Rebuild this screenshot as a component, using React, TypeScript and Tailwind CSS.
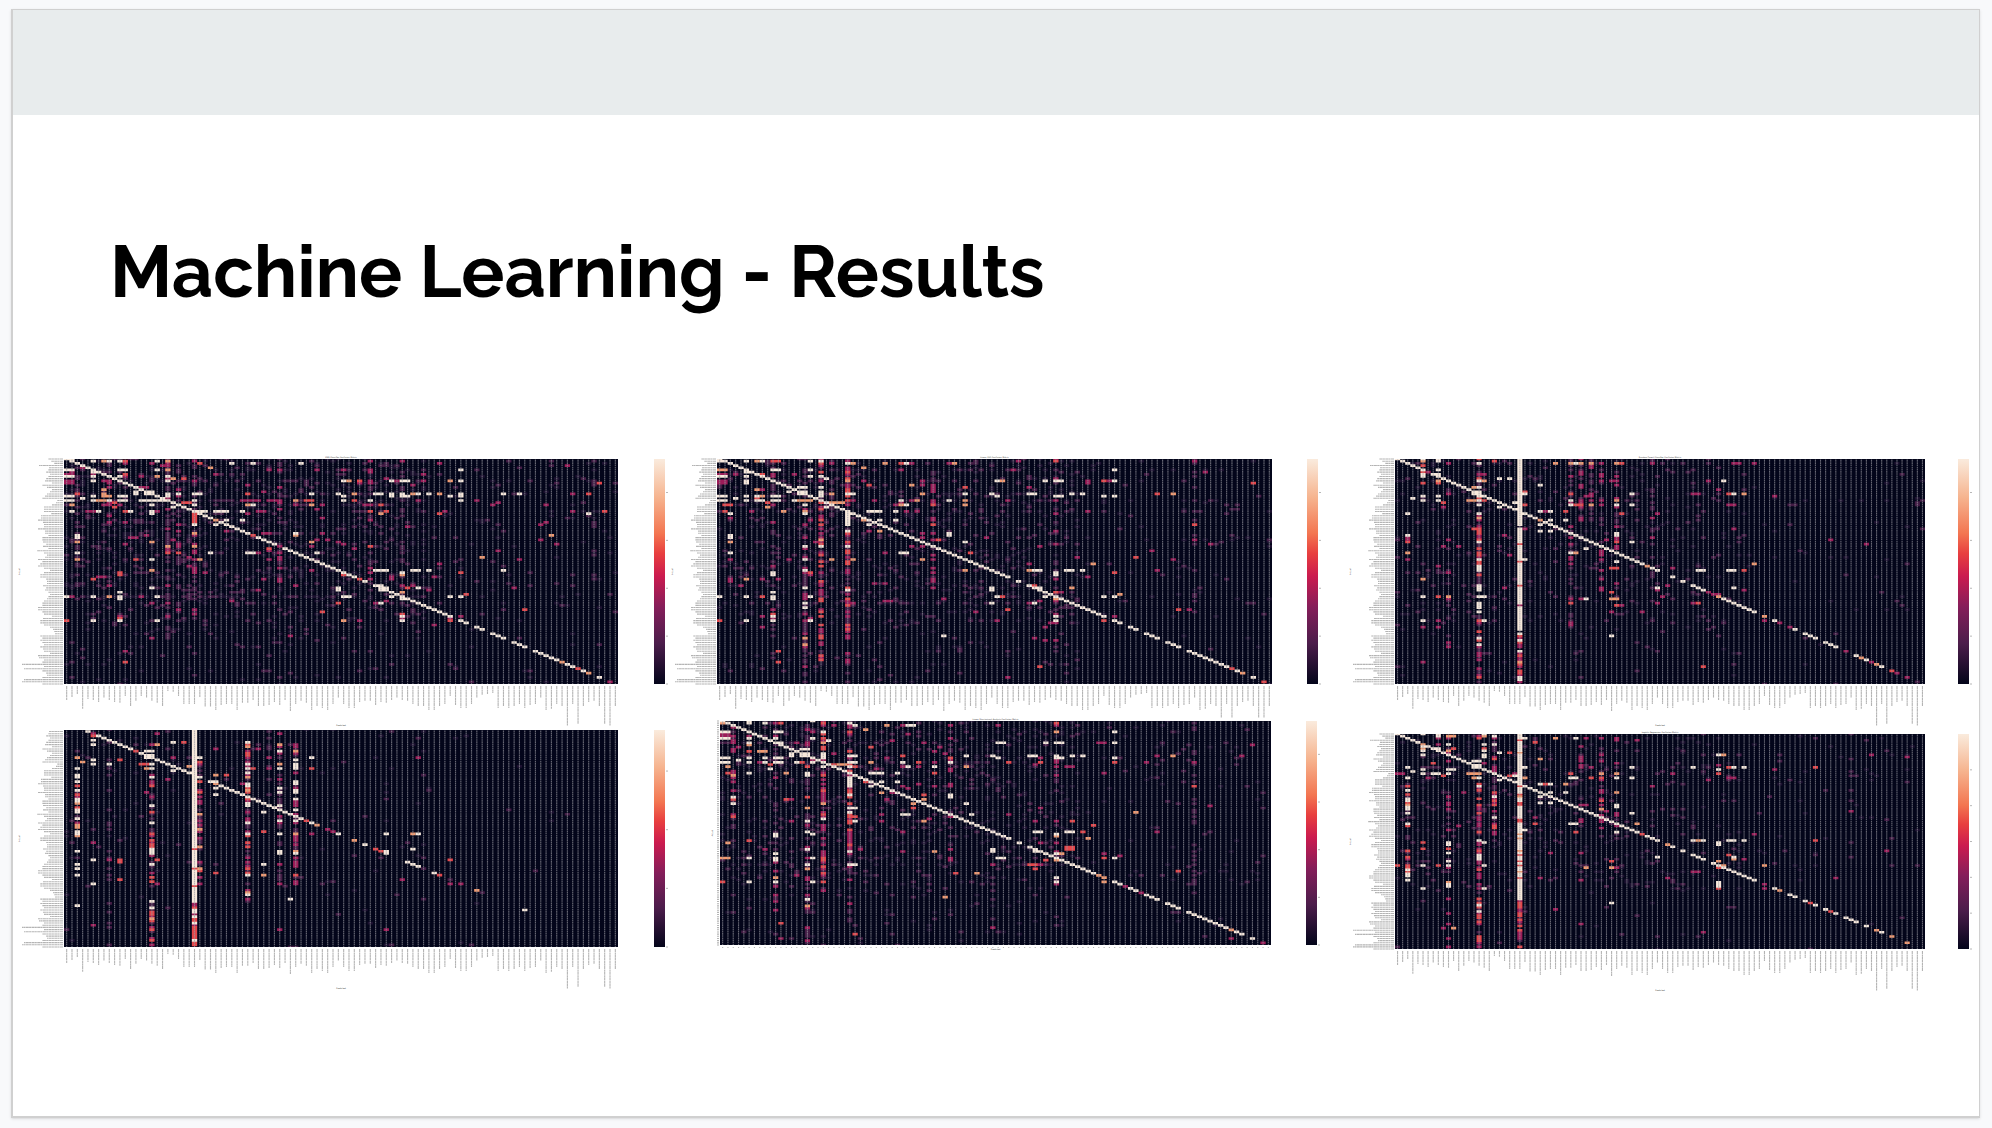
import React from "react";

const SIZE = 104;

const LEVELS: Record<string, string> = {
  d: "#1c1130",
  p: "#431c45",
  m: "#9c1c58",
  r: "#e4464a",
  o: "#f39a70",
  w: "#f8e9dc",
};

/* Approximate printed length of each class name on the axes. */
const NAMES = [
  14, 11, 8, 23, 13, 14, 16, 12, 14, 16, 17, 10, 20, 15, 10, 12, 15, 17, 20, 5, 6, 10, 18, 18, 18, 11,
  21, 21, 24, 19, 18, 18, 24, 17, 17, 14, 20, 20, 19, 16, 19, 14, 25, 18, 15, 17, 24, 20, 22, 24, 18, 12,
  18, 22, 22, 16, 15, 15, 19, 16, 17, 14, 12, 14, 15, 18, 20, 20, 24, 24, 20, 18, 10, 19, 22, 22, 18, 12,
  9, 8, 7, 22, 20, 22, 20, 18, 22, 19, 18, 12, 24, 23, 18, 20, 40, 18, 38, 20, 16, 15, 20, 38, 40, 20,
];

type Streak = { col: number; density: number; palette: string; from?: number; to?: number };

type Matrix = {
  title: string;
  width: number;
  height: number;
  plot: { x: number; y: number; w: number; h: number };
  barX: number;
  firstRow?: number;
  ticksOnly?: boolean;
  hideTitle?: boolean;
  hidePredicted?: boolean;
  barTicks: number;
  seed: number;
  haze: number;
  diagonal: string;
  streaks: Streak[];
  busyRows: number[];
  cells: string;
};

const MATRICES: Matrix[] = [
  {
    title: "KNN Classifier Confusion Matrix",
    width: 656,
    height: 274,
    plot: { x: 51, y: 3, w: 554, h: 225 },
    barX: 641,
    barTicks: 5,
    seed: 11,
    haze: 0.14,
    diagonal: "0-54w 55r 56w 58-72w 74-75w 77-78w 80-82w 84-86w 88-92w 93o 94-95w 96r 97w 98o 100w 102m",
    busyRows: [5, 10, 16, 19, 21, 24, 43, 63],
    streaks: [
      { col: 19, density: 0.5, palette: "ppm", to: 82 },
      { col: 24, density: 0.5, palette: "ppm", to: 76 },
      { col: 21, density: 0.3, palette: "ppm", to: 70 },
      { col: 8, density: 0.25, palette: "ppm", to: 60 },
      { col: 2, density: 0.3, palette: "p", to: 60 },
      { col: 57, density: 0.25, palette: "ppm", to: 60 },
      { col: 40, density: 0.3, palette: "ppm", to: 60 },
      { col: 63, density: 0.3, palette: "ppp", to: 90 },
      { col: 99, density: 0.2, palette: "p", to: 60 },
    ],
    cells:
      "0:0-1w|1:5w 7o 8w 10w 11r 17w 19o 24m 46p 57m 63m 99p|2:11m 16m 19m 25r 31w 35w 44w 34p 36p 70m|3:18m 8p 40p|4:27o|5:0-1w 5w 10-11w 17w 19o 38m 40m 52m 74w|6:5w 1m 8p|7:0-1m 5m 11r 14p 52p|8:0-1w 5w 10w 11m 14m 17o 19w|9:20o 22r|10:0-1m 5w 7-8m 19w 36p 45p 52w 53o 55r 61w 63-64w 72o 74w 87p|11:0-1m 8m 24p 55m 100r|12:28p 34m 45p|13:15m 46p|14:7o|15:13w 15-16w|16:2r 7o 13w 15w 19w 21w 24-25w 34r 46w 51w 54o 58-59w 61w 63w 65o 66w 68w 70o 74w 82w 85w 95m 98r|17:0-1w 5w 7-8o 10-11w 19w 52w 61w 63-64w 72w 74w|18:3w|19:0-1w 5w 6-7o 8w 10-11w 14-18w 24w 28-31p 33-36m 38-40m 43o 45-46r 52w 54r 57w 74w 77m|20:22-23r 9r|21:1o 7-8m 10m 16w 24w 34o 35w 43m 46o 59r 80m|22:9r 20w|24:1w 4-5m 6w 11r 12w 16w 25-26w 28-30w 33w 36-37m 57r 60r 59p 95m 101r|25:16w 59o 70r 98w 34m 24r|26:24r|27:24r|28:24r 28o 30w 33w|29:24r|30:28w 24w 89m 19p 99p|33:30m|34:24o 43w 37-38m 48m|35:2w 35r 43o 91o|36:2w 12-13m|37:49m 47m 89m|38:2o 16o 46o|39:21m 92m|40:19o 24o 57r 40m 21m|41:38r 54m|42:19m 81m|43:2w 19r 21r 24m 27w 34-35w 36m 47w|45:78o|46:2o 13r 16w 25o 38m 40m 85m|48:70m|50:41p 70p|51:16o 24m 46m 58-60w 65-66w 68w 82w|52:10r 63w 74r 17p|53:10r 52r 63o|54:61m 69m|55:5r 61m|58:65m 59w 63m|59:16w 51w 60w 64r 66w|60:51w 36m 59w 68m|61:10w 63o|62:75r|63:0w 1m 5w 8o 10w 14m 17w 52-53w 61w 72w 74w|64:10w 63w|65:31m 60m|66:16m 51r 59w 58m|69:86r 21m|70:48r|71:63r 10p|72:10m 63w 74m|73:10r 63m 72m|74:0r 5w 10w 17w 52o 55m 63w 72r|76:69m 11p|81:42m|82:16m|88:11m|93:11r",
  },
  {
    title: "Linear SVC Confusion Matrix",
    width: 672,
    height: 262,
    plot: { x: 48, y: 3, w: 555, h: 225 },
    barX: 638,
    barTicks: 5,
    hidePredicted: true,
    seed: 23,
    haze: 0.11,
    diagonal: "0-54w 56w 58-72w 74-75w 77-78w 80-82w 84-86w 88-95w 96r 97w 98o 100w 102r",
    busyRows: [5, 10, 16, 19, 21, 24, 63, 66],
    streaks: [
      { col: 19, density: 0.6, palette: "pmmmr", to: 92 },
      { col: 24, density: 0.7, palette: "ppmmr", to: 78 },
      { col: 24, density: 0.4, palette: "ppm", from: 79 },
      { col: 16, density: 0.5, palette: "ppm" },
      { col: 21, density: 0.3, palette: "p", to: 60 },
      { col: 10, density: 0.25, palette: "ppm", to: 90 },
      { col: 40, density: 0.3, palette: "pm", to: 60 },
      { col: 63, density: 0.3, palette: "ppm", to: 90 },
      { col: 89, density: 0.2, palette: "p", to: 70 },
    ],
    cells:
      "1:0-1w 5w 7o 8w 10-11r 17w 19w 24m 56m 63r 89m|2:21m 24w 25o 31o 34r 35w 36m 43m 44o|4:27o|5:0-1o 5w 10-11w 17w 24m 63p 74w|6:5w 3p 19r|7:0-1m 3m 8r 10m 14m|8:0-1w 5w 17w 19w|9:20w 22p|10:0-1m 5w 19m 24o 52w 53o 61w 63-64w 72r 73m 74w 69m 87p|11:0-1m 5w 100r 69m|12:24m 28r 36o 76p|13:15-16w 46r 19w|14:7o 8m|15:13w 16w 19w|16:15w 19w 21o 24-25w 38o 46w 51w 58-59w 66w 68w 82r 85o|17:0-1w 5w 7w 8o 10-11w 19w 24r 52w 63-64w 72w 74w|18:3w 7r|19:0-1w 5w 7-8w 10-11w 14w 15-17o 24r 25m 29m 34w 36m 37o 40m 43w 46o 54m 63m 92p|20:9r 21o 22-23o 34m|21:1-2r 10m 16w 34o 35w 40r 46o|22:9o 20w|24:1r 6m 12o 16o 28-30w 33w 37m 69m|25:2w 16w 24w|26:24w|27:2m 24w 40m|28:19r 24w 27o 30w 33w|29:24w|30:24w 28w 40r 89r|33:24w 28m 30o|34:24r 38m 43w|35:2w 24m 43w|36:2w 16m 38m 50m|37:19o 41r 89m|38:2o 24r 46w|39:24m 92m|40:16w 19w 24w 36m 38m 60m|42:81m 24r|43:2w 19m 24r 34-35w 47r|45:78r|46:2m 13m 16w 21o 25o 38o 40m 85m|48:70o|51:16w 24m 46o 58o 59-60w 65-66w 68w 82m|52:10w 17r 19m 63w 74r|53:10w 17m 63w|54:69m|55:5o 8m 63m|58:59r|59:16w 51w 60w 66o|60:24w 51w|61:10w 63r 64m|62:75o|63:0w 5w 8r 10w 17w 52w 53r 61w 72w 74w|64:10w 19r 24r 63o 42m|65:31-32m 19r 60m|66:16w 51w 58m 59w 25m|68:16w|69:54r 86r 88m|70:48m 24m|71:10r 63m|72:10w 8m 19r 63w 74m|73:10m 17m|74:0r 5w 10w 17w 52m 63w 72r|75:62m|77:8m 61m|81:42w|82:16o 59m|83:61m|85:16o|88:11r|93:11r|95:60r|100:54m",
  },
  {
    title: "Random Forest Classifier Confusion Matrix",
    width: 638,
    height: 275,
    plot: { x: 54, y: 3, w: 530, h: 225 },
    barX: 617,
    barTicks: 5,
    seed: 37,
    haze: 0.06,
    diagonal: "0-48w 49o 50-51w 54w 56w 58-60w 61-62m 63o 64-70w 72o 74w 75m 77m 78w 80-82w 84-86w 88m 90w 91o 92w 93m 94o 95w 97r 98m 100m 102p",
    busyRows: [2, 10, 16, 19, 21],
    streaks: [
      { col: 24, density: 1, palette: "w", to: 78 },
      { col: 24, density: 0.9, palette: "mrrow", from: 80 },
      { col: 16, density: 0.6, palette: "pppmr" },
      { col: 34, density: 0.4, palette: "pm", to: 80 },
      { col: 36, density: 0.5, palette: "pm", to: 28 },
      { col: 38, density: 0.5, palette: "pm", to: 28 },
      { col: 40, density: 0.4, palette: "pm", to: 60 },
      { col: 50, density: 0.2, palette: "p", to: 60 },
      { col: 43, density: 0.4, palette: "pm", to: 68 },
      { col: 10, density: 0.2, palette: "pm", to: 90 },
    ],
    cells:
      "0:5w 8w|1:5o 8w 19r|2:16w 31o 34o 35w 36o 38o 40m 43o 44r 50m 66-67m 70m|3:5r|5:5w 8w|6:6m 5r|7:5w 8w 16m 17m|8:5w|9:20w 22w|10:8o 16w 17o 34p 40m 42-43m 64w 61m|11:8r 5r|12:28w 36m|13:15o 16w 36m|15:16w 25r|16:15w 25w 34r 38m 46w 58-59m 65r 66w 68o|17:5w 8w 16w 37-38m 74m|18:3w|19:5w 8w 14-15o 16w 17r 28p 34w 40m 43o|20:9r 23w|21:16w 25r 34w 35-36r 38o 40m 43w 46w 65-66m|22:20w 9m|24:28w 30w 33r 29m|25:2w 16w 44r|27:16o 50m|28:28o 30w 33w|30:28w|31:24d|32:15r 25m|33:16r 28w 30w|34:16r 43w|35:2w 21m 43w 16m|36:2m 16m 50m|37:2m 16r 41m|38:2r 16w 46w 43r|39:92m 24r|41:37w 16r|43:2o 34w 35o|44:16r|46:2m 16w 25w 40m|47:43w 24r|48:70o 16r|49:16w|50:16w 42-43r|51:16w 59-60w 65-66w 68r|52:10m|55:5o|58:16w 24r|59:16w 21m 51w 59w 66w|60:51m 16w 68m|61:42r|62:63m|63:5w 8r 10o 17w 16w 52m|64:10m 37w 42-43o 36m|66:16w 34r 51m 58m 59r|67:16w 43r 44m 24m|68:16w|70:16w 42m 48m|74:5w 8m 17w 72m|77:5m 8m|81:42w|82:16w|85:16w|93:5m|95:60r",
  },
  {
    title: "",
    width: 656,
    height: 262,
    plot: { x: 51, y: 0, w: 554, h: 217 },
    barX: 641,
    barTicks: 4,
    firstRow: 3.8,
    hideTitle: true,
    seed: 41,
    haze: 0.02,
    diagonal: "4-12w 13r 14-23w 27-44w 45r 46w 47o 49m 51w 54o 56w 58-59r 60w 64-66w 67p 69w 70r 74m 77o 78p 86w",
    busyRows: [10, 16, 21],
    streaks: [
      { col: 24, density: 1, palette: "w", to: 81 },
      { col: 24, density: 0.95, palette: "mrrwww", from: 82 },
      { col: 25, density: 0.55, palette: "ppmmro", from: 16, to: 74 },
      { col: 2, density: 0.6, palette: "pmrow", from: 24, to: 52 },
      { col: 16, density: 0.45, palette: "ppmmr", from: 20 },
      { col: 34, density: 0.75, palette: "ppmmrw", from: 9, to: 82 },
      { col: 40, density: 0.5, palette: "pppmw", from: 9, to: 74 },
      { col: 43, density: 0.65, palette: "ppmmow", from: 9, to: 74 },
      { col: 8, density: 0.2, palette: "p" },
      { col: 38, density: 0.25, palette: "ppm", to: 36 },
    ],
    cells:
      "5:17m 40m 5m|6:5r|8:5w|9:20w 22r|10:5w 16m 17o 34r 36p 40o 43m|11:34o|12:28m 36m|13:15-16w 43o|15:16w|16:2o 15w 25w 34m 46w 66m|17:5w 10r 43w|18:3o|19:5w 8w 14-15r 16w 34w 40o 43w|20:23o 43w|21:2w 15o 16w 34w 35r 38m 40w 43w 46r|22:20w|24:28o 30r 2w 34m|25:2w 16w 25w 34o|27:2w 28w 43w|28:28o 33m 43w|30:28w 34r|31:2w 34o 43w|32:15m 25r 34r 40w 43w|33:28w|35:2w 34r 43w|36:2w|38:16w|41:2w 16r 37w|46:16w|47:2o|48:2o|50:2w 37r|51:2w 34w 46m 60w 65o 66w|55:5m|58:24r 65w 16w|59:2w 16w 60w 40w 43o|60:16w 60w 40w 43w|63:5w 8m 10r 17r 72r|64:10r 43m|65:2w 16w 37w|67:24r 2w|69:28r 16m|70:2w 37o 43r|72:63m 72p 10r|74:5w 17m 72m|75:24r|78:34o|81:42w|82:16w|84:2w|85:16w|90:16o|93:5m|95:60m 40m",
  },
  {
    title: "Linear Discriminant Analysis Confusion Matrix",
    width: 672,
    height: 262,
    plot: { x: 51, y: 3, w: 551, h: 224 },
    barX: 637,
    barTicks: 5,
    ticksOnly: true,
    seed: 53,
    haze: 0.11,
    diagonal: "0-54w 56w 58-70w 71-72o 74-75w 76m 77-78w 79m 80-82w 84-86w 88-95w 96o 97-98w 100w 102m",
    busyRows: [5, 10, 17, 19, 21, 63, 66],
    streaks: [
      { col: 19, density: 0.6, palette: "pmmr", to: 78 },
      { col: 24, density: 0.7, palette: "ppmmr", to: 60 },
      { col: 24, density: 0.5, palette: "ppm", from: 61, to: 95 },
      { col: 16, density: 0.5, palette: "ppm" },
      { col: 2, density: 0.3, palette: "pm", to: 50 },
      { col: 10, density: 0.3, palette: "ppm", to: 90 },
      { col: 43, density: 0.3, palette: "ppm", to: 66 },
      { col: 63, density: 0.3, palette: "ppm", to: 90 },
      { col: 89, density: 0.3, palette: "p", to: 80 },
    ],
    cells:
      "0:0w 5w 17w|1:0o 5w 8w 10m 11r 19r 24w 63r|2:21m 25w 31o 34m 35-36w 43m|4:27o|5:0-1w 10-11w 17m 19w 24r 63o 74w|6:0-1m|7:0-1m 5m 10m|8:0-1w 5w 10w 17w 19r|9:20w|10:0-1p 5w 11w 19o 38m 52-53w 61w 63-64w 71-72m 74w|11:5o 100m|12:28r|13:15-16w 19r|14:7-8o 5r 40m|15:13w 16w 19w 21m|16:13w 15w 19w 24-25w 34r 46w 51w 58-59w 66w 68w 63w 82m 85o 98m|17:0-1w 5w 8w 10-11w 19w 24m 43r 52w 60m 63-64w 74w|18:3w|19:0-1w 5w 7m 8w 10-11w 14w 15r 17w 24-25w 28o 34w 37r 40m 43w 54r 60r 63m 74r 89m|20:9r 21r 22-23o 24r|21:1o 16r 19w 24w 25r 34m 35w 37m 40w 46o 63m 65-66m|22:9w|24:1r 5w 12o 16w 28-30w 33w 40r|25:2o 16w|26:24w|27:24w|28:24w 27r 30w 33w|29:24w|30:24w 28w 34m 43m 89r|33:30o 24r|34:38r 43w 24w|35:2w 16r 43w|36:2r 12r 13m 19m 38o|38:2w 24r 36o 46w 19o|39:92m|40:16o 24-25w 36r 60m|42:78o 24w|43:2m 24r 30m 34-35w 47w|44:2r 24-25r|45:19w|46:13m 16w 25w 38o 66r|48:70r|51:16w 24m 59-60w 65-66w 68r 82m|52:10w 17w 63w|53:10w 63o|54:69o|55:5r|56:1o|58:65-66r|59:16w 51w 65-66r|60:51w 24w 40o 34m 59w|61:10w 63w 64o 72m|62:75m|63:0-1o 5w 10w 17w 52-53w 72r 74w|64:10w 19r 43m 61r 63o|66:16w 24-25w 58-59r 60m 51m|68:16o 59r|69:86r|70:48o 44r|71:14m|72:10o 63w|74:0r 5w 10w 17w 63w 72o|81:42o|82:16w|85:16o|87:10m|93:11r|95:51m 16m|98:25r|100:11m 96m",
  },
  {
    title: "Logistic Regression Confusion Matrix",
    width: 638,
    height: 261,
    plot: { x: 54, y: 3, w: 530, h: 215 },
    barX: 617,
    barTicks: 6,
    seed: 67,
    haze: 0.07,
    diagonal: "0-47w 48r 49-51w 53o 54w 56w 58-60w 62-70w 72m 74w 75o 77-78w 80w 81r 82w 84w 85r 86w 88-90w 92w 94o 95w 97o 100o",
    busyRows: [2, 10, 16, 19, 21],
    streaks: [
      { col: 24, density: 1, palette: "wwwwro", to: 80 },
      { col: 24, density: 0.9, palette: "pmmrr", from: 80 },
      { col: 16, density: 0.7, palette: "ppmmr", from: 24 },
      { col: 19, density: 0.6, palette: "pmmr", to: 48 },
      { col: 2, density: 0.5, palette: "pmrw", from: 24, to: 70 },
      { col: 40, density: 0.3, palette: "pm", to: 48 },
      { col: 36, density: 0.25, palette: "pm", to: 70 },
      { col: 43, density: 0.35, palette: "pm", to: 68 },
      { col: 10, density: 0.25, palette: "pm" },
      { col: 89, density: 0.2, palette: "p", to: 60 },
    ],
    cells:
      "0:5w 8w 17w 24w|1:8w 10-11o 16m 17o 19w|2:16r 25w 31o 35w 37m 43m|4:27r|5:5o 8m 10w 17w 19w|6:5w|7:5o 8w 11r 17r|8:5w 10o 17w|9:20w 22r|10:5w 17w 40m 63w 64o|11:17w 100m|12:28o 36m|13:15-16w 36m|14:7r 17m|15:16w|16:2w 15w 25w 38m 46w 58w 65r 66w 68w 82r|17:5w 10-11w 63w 74m|18:3w|19:0-1m 5w 7-8w 10w 14-16o 23m 34r 40o 43o 54m 63r|20:9r 22r 23w|21:2w 15o 16w 25o 34-35w 38r 40r 43w 46w 66m|22:20w|24:16r 28w 29r 30w 33o|25:2r 16w|27:2w|28:19r 30w 33w 43o|30:28w 19w|31:2w 40m 16r|32:40r|33:28w 30w|34:2o 16r 36-37m 43w|35:2w 43w|36:2w 10m 40o|37:41m 89m|38:2w 16r 46w 43m|40:19w|43:2w 27r 34-35w 47o|44:12m|45:40m 19r|46:25w|47:35r 43w|48:70m|51:16w 58w 59o 60w 65-66w 68w 82r|52:5r 10w 17w 63w|53:10w 63w|55:5r 10r|57:10w|58:65r 16w|59:16w 51w 59w 66w|60:66o 68m 16w|61:42r 63o 10w|63:0r 5w 8r 10w 17w 64o 72o|64:37o 42o 63r|66:2r 58-59m|69:28m 53m 86m|71:63w 10o|72:10w 63w|73:10w 63w|74:5w 17w 63r 72m|81:42w|82:16w|84:31m|85:16w|91:36m|93:9m 11o|95:60m",
  },
];

function random(seed: number) {
  let s = seed * 7919;
  return () => {
    s = (s * 1103515245 + 12345) % 2147483648;
    return s / 2147483648;
  };
}

function eachRun(text: string, visit: (col: number, level: string) => void) {
  for (const token of text.split(" ")) {
    const level = token.slice(-1);
    const [from, to] = token.slice(0, -1).split("-").map(Number);
    for (let c = from; c <= (to ?? from); c++) visit(c, level);
  }
}

function buildPaths(m: Matrix) {
  const rnd = random(m.seed);
  const grid = new Map<number, string>();
  const put = (r: number, c: number, level: string) => grid.set(r * SIZE + c, level);

  for (let r = 0; r < SIZE; r++) {
    for (let c = 0; c < SIZE; c++) {
      const fade = (c < 68 ? 1 : 0.22) * (r < 76 ? 1 : 0.25);
      const boost = m.busyRows.includes(r) ? 2.6 : 1;
      if (rnd() < m.haze * fade * boost) {
        const k = rnd();
        put(r, c, k > 0.96 && r < 60 ? "m" : k > 0.6 ? "p" : "d");
      }
    }
  }
  for (const s of m.streaks) {
    for (let r = s.from ?? 0; r <= (s.to ?? 102); r++) {
      if (rnd() < s.density) put(r, s.col, s.palette[Math.floor(rnd() * s.palette.length)]);
    }
  }
  eachRun(m.diagonal, (c, level) => put(c, c, level));
  for (const line of m.cells.split("|")) {
    const [row, runs] = line.split(":");
    eachRun(runs, (c, level) => put(Number(row), c, level));
  }

  const paths: Record<string, string> = {};
  grid.forEach((level, key) => {
    const r = Math.floor(key / SIZE);
    const c = key % SIZE;
    paths[level] = (paths[level] ?? "") + `M${c} ${r - 0.12}h1v1.24h-1z`;
  });
  return paths;
}

const COLUMNS = Array.from({ length: SIZE }, (_, i) => i);

function Heatmap({ matrix: m }: { matrix: Matrix }) {
  const { x, y, w, h } = m.plot;
  const first = m.firstRow ?? 0.5;
  const rows = 103.5 - first;
  const cw = w / SIZE;
  const ch = h / rows;
  const paths = buildPaths(m);
  const middle = x + w / 2;

  return (
    <svg
      viewBox={`0 0 ${m.width} ${m.height}`}
      className="block h-auto w-full"
      role="img"
      aria-label={m.title || "Confusion matrix"}
    >
      {!m.hideTitle && (
        <text x={middle} y={y - 1} fontSize="2" textAnchor="middle" fill="#333">
          {m.title}
        </text>
      )}
      <svg x={x} y={y} width={w} height={h} viewBox={`0 ${first} ${SIZE} ${rows}`} preserveAspectRatio="none">
        <rect x="0" y="0" width={SIZE} height={SIZE} fill="#03051a" />
        {Object.keys(LEVELS).map((k) => (
          <path key={k} d={paths[k]} fill={LEVELS[k]} />
        ))}
        <path
          d={COLUMNS.map((c) => `M${c + 0.5} 0V104`).join("")}
          stroke="#9a9aa2"
          strokeOpacity="0.65"
          strokeWidth="0.22"
          strokeDasharray="0.75 0.25"
        />
      </svg>
      <g stroke="#777" strokeOpacity="0.55">
        {COLUMNS.map((i) => {
          const ly = y + (i + 0.5 - first) * ch;
          return ly < y ? null : (
            <path
              key={i}
              d={`M${x - 1} ${ly}h${m.ticksOnly ? -2 : -NAMES[i] - 1}`}
              strokeWidth="1.1"
              strokeDasharray={m.ticksOnly ? undefined : "3 0.4 2 0.3"}
            />
          );
        })}
        {COLUMNS.map((i) => (
          <path
            key={i}
            d={`M${x + (i + 0.5) * cw} ${y + h + 2}v${m.ticksOnly ? 1 : NAMES[i]}`}
            strokeWidth="1.1"
            strokeDasharray={m.ticksOnly ? undefined : "3 0.4 2 0.3"}
          />
        ))}
      </g>
      {!m.hidePredicted && (
        <text
          x={middle}
          y={y + h + (m.ticksOnly ? 5 : 42)}
          fontSize="2"
          textAnchor="middle"
          fill="#333"
        >
          Predicted
        </text>
      )}
      <text
        x={m.ticksOnly ? x - 7 : x - 44}
        y={y + h / 2}
        fontSize="2"
        textAnchor="middle"
        fill="#333"
        transform={`rotate(-90 ${m.ticksOnly ? x - 7 : x - 44} ${y + h / 2})`}
      >
        Actual
      </text>
      <rect x={m.barX} y={y} width="11" height={h} fill="url(#rocket)" />
      {Array.from({ length: m.barTicks }, (_, i) => (
        <path
          key={i}
          d={`M${m.barX + 12} ${y + h - (i * h) / (m.barTicks + 0.3 - (m.barTicks === 6 ? 0.3 : 0.6))}h2`}
          stroke="#999"
          strokeWidth="0.7"
        />
      ))}
    </svg>
  );
}

export default function App() {
  return (
    <main className="min-h-screen bg-[#f8f9fb] pt-[9px] pr-3 pb-[10px] pl-[11px]">
      <svg width="0" height="0" className="absolute" aria-hidden="true">
        <defs>
          <linearGradient id="rocket" x1="0" y1="0" x2="0" y2="1">
            <stop offset="0" stopColor="#faebdd" />
            <stop offset="0.17" stopColor="#f6b48f" />
            <stop offset="0.33" stopColor="#f37651" />
            <stop offset="0.42" stopColor="#e83f3f" />
            <stop offset="0.52" stopColor="#cb1b4f" />
            <stop offset="0.66" stopColor="#841e5a" />
            <stop offset="0.82" stopColor="#4c1d4b" />
            <stop offset="1" stopColor="#03051a" />
          </linearGradient>
        </defs>
      </svg>
      <section className="min-h-[1109px] border-t border-r border-b-2 border-l-2 border-[#d0d0d0] bg-white shadow-sm">
        <div className="h-[105px] bg-[#e8eced]" />
        <h1
          className="mt-[113px] ml-[97px] text-7xl leading-[88px] font-bold text-black"
          style={{ fontFamily: 'Raleway, Lato, "Open Sans", sans-serif' }}
        >
          Machine Learning - Results
        </h1>
        <div
          className="mt-[140px] grid grid-cols-[656fr_672fr_638fr] items-start"
          style={{ fontFamily: '"DejaVu Sans", sans-serif' }}
        >
          {[0, 1, 2].map((c) => (
            <div key={c} className="flex flex-col">
              <Heatmap matrix={MATRICES[c]} />
              <Heatmap matrix={MATRICES[c + 3]} />
            </div>
          ))}
        </div>
      </section>
    </main>
  );
}
